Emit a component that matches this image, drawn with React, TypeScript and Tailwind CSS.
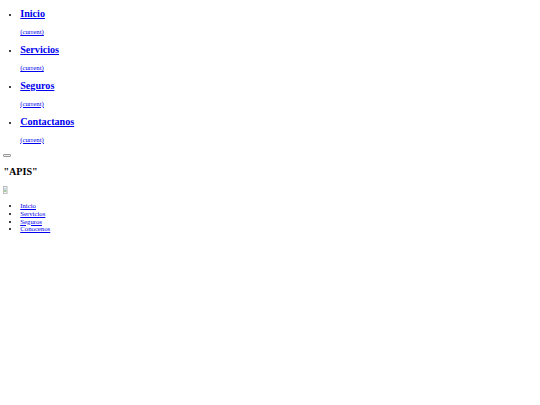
import React from "react";

const linkCls = "text-[#0000ee] underline";

function NavItem({ label }: { label: string }) {
  return (
    <li>
      <a href="#" className={linkCls}>
        <h2 className="my-[8.4px] text-[10.125px] leading-[11.4px] font-bold">{label}</h2>
        <span>(current)</span>
      </a>
    </li>
  );
}

export default function App() {
  return (
    <div className="m-[3.375px] font-['Liberation_Serif',serif] text-[6.75px] leading-[7.6px] text-black">
      <ul className="my-[6.75px] list-disc pl-[16.875px]">
        <NavItem label="Inicio" />
        <NavItem label="Servicios" />
        <NavItem label="Seguros" />
        <NavItem label="Contactanos" />
      </ul>
      <div>
        <button
          type="button"
          className="inline-block h-[2.5px] w-[8px] rounded-[1px] border-[0.5px] border-[#9a9a9a] bg-[#efefef] align-baseline"
        >
          <span></span>
        </button>
      </div>
      <h2 className="my-[8.4px] text-[10.125px] leading-[11.4px] font-bold">"APIS"</h2>
      <div>
        <svg width="4.5" height="8.4" viewBox="0 0 5 9" className="inline-block align-baseline">
          <rect x="0.5" y="0.5" width="4" height="8" fill="#f4f4f4" stroke="#a8a8a8" strokeWidth="0.8" />
          <rect x="1.3" y="4" width="2.4" height="2.5" fill="#9fc79a" />
          <rect x="1.3" y="2" width="2.4" height="1.6" fill="#b9d3ea" />
        </svg>
      </div>
      <ul className="my-[6.75px] list-disc pl-[16.875px]">
        <li><a href="#" className={linkCls}>Inicio</a></li>
        <li><a href="#" className={linkCls}>Servicios</a></li>
        <li><a href="#" className={linkCls}>Seguros</a></li>
        <li><a href="#" className={linkCls}>Conocenos</a></li>
      </ul>
    </div>
  );
}
